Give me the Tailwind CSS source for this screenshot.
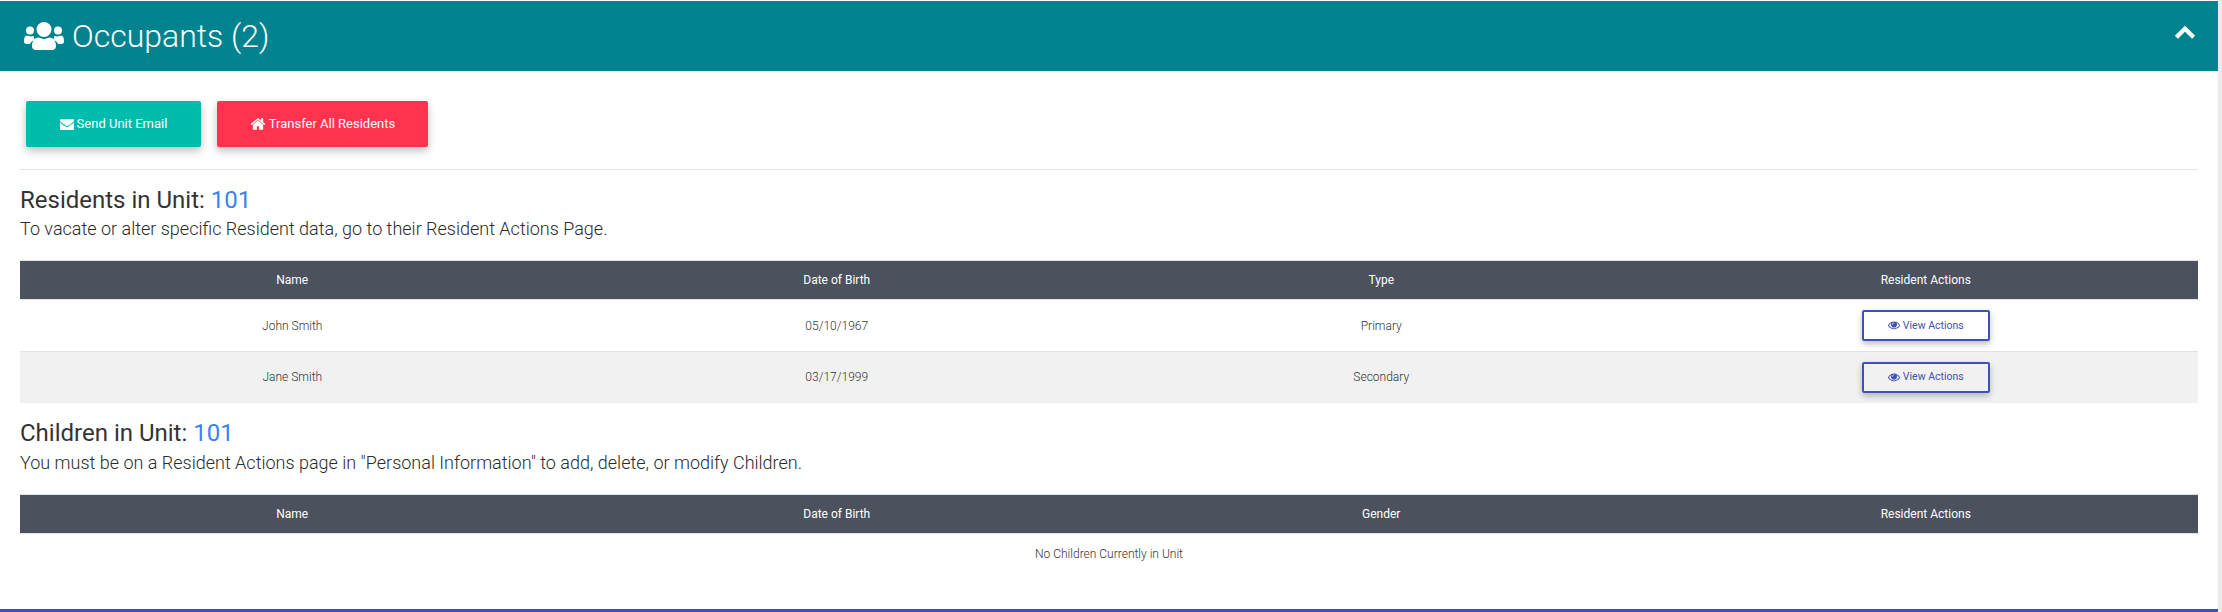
<!DOCTYPE html>
<html lang="en">
<head>
  <meta charset="UTF-8">
  <meta name="viewport" content="width=device-width, initial-scale=1.0">
  <title>Occupants</title>
  <script src="https://cdn.jsdelivr.net/npm/@tailwindcss/browser@4"></script>
</head>
<body class="bg-white font-['Roboto',sans-serif] overflow-hidden">
  <div class="flex h-[612px] w-[2222px]">
    <div class="flex h-[612px] w-[2218px] flex-col border-b-[3px] border-[#3f51b5] pt-px">
      <!-- card header -->
      <div class="flex h-[70px] items-center justify-between bg-[#00838f] pl-6 pr-[22px] text-white">
        <div class="flex items-center gap-2">
          <svg class="h-7 w-10 fill-white" viewBox="0 0 40 28">
            <circle cx="20" cy="7.500" r="7.500"/>
            <circle cx="6" cy="8.500" r="4"/>
            <circle cx="34" cy="8.500" r="4"/>
            <path d="M8 24C8 19 11 15.500 14.500 15.500C16 15.500 17.500 17 20 17C22.500 17 24 15.500 25.500 15.500C29 15.500 32 19 32 24C32 26.500 30.500 28 28 28H12C9.500 28 8 26.500 8 24Z"/>
            <path d="M0 19.500C0 15.500 1 13.500 3 13.500C4 13.500 5 14.500 7 14.500C8 14.500 9 14 9.600 13.800C9.600 15.500 10.200 17 11 18C8.500 18.500 7 20 5.800 22H2.500C1 22 0 21 0 19.500Z"/>
            <path d="M40 19.500C40 15.500 39 13.500 37 13.500C36 13.500 35 14.500 33 14.500C32 14.500 31 14 30.400 13.800C30.400 15.500 29.800 17 29 18C31.500 18.500 33 20 34.200 22H37.500C39 22 40 21 40 19.500Z"/>
          </svg>
          <h1 class="text-[32px] font-light leading-none">Occupants (2)</h1>
        </div>
        <svg class="mb-2.5 h-[22px] w-[22px] fill-white" viewBox="0 0 1792 1792"><path d="M1683 1331l-166 165q-19 19-45 19t-45-19l-531-531-531 531q-19 19-45 19t-45-19l-166-165q-19-19-19-45.500t19-45.500l742-741q19-19 45-19t45 19l742 741q19 19 19 45.500t-19 45.500z"/></svg>
      </div>

      <div class="px-5">
        <!-- action buttons -->
        <div class="flex gap-4 pl-1.5 pt-[30px] pb-[22px] border-b border-[#e5e5e5]">
          <button class="flex h-[46px] w-[175px] items-center justify-center gap-[3px] rounded-[2px] bg-[#00bcad] text-[13px] text-white shadow-[0_4px_8px_rgba(0,0,0,0.25)]">
            <svg class="h-[14px] w-[14px] fill-white" viewBox="0 0 1792 1792"><path d="M1792 710v794q0 66-47 113t-113 47h-1472q-66 0-113-47t-47-113v-794q44 49 101 87 362 246 497 345 57 42 92.500 65.500t94.500 48 110 24.500h2q51 0 110-24.500t94.500-48 92.500-65.500q170-123 498-345 57-39 100-87zm0-294q0 79-49 151t-122 123q-376 261-468 325-10 7-42.500 30.500t-54 38-52 32.500-57.500 27-50 9h-2q-23 0-50-9t-57.500-27-52-32.500-54-38-42.500-30.500q-91-64-262-182.500t-205-142.500q-62-42-117-115.500t-55-136.500q0-78 41.500-130t118.500-52h1472q65 0 112.500 47t47.500 113z"/></svg>
            Send Unit Email
          </button>
          <button class="flex h-[46px] w-[211px] items-center justify-center gap-[3px] rounded-[2px] bg-[#ff334f] text-[13px] text-white shadow-[0_4px_8px_rgba(0,0,0,0.25)]">
            <svg class="h-4 w-4 fill-white" viewBox="0 0 1792 1792"><path d="M1472 992v480q0 26-19 45t-45 19h-384v-384h-256v384h-384q-26 0-45-19t-19-45v-480q0-1 .5-3t.5-3l575-474 575 474q1 2 1 6zm223-69l-62 74q-8 9-21 11h-3q-13 0-21-7l-692-577-692 577q-12 8-24 7-13-2-21-11l-62-74q-8-10-7-23.500t11-21.500l719-599q32-26 76-26t76 26l244 204v-195q0-14 9-23t23-9h192q14 0 23 9t9 23v408l219 182q10 8 11 21.500t-7 23.500z"/></svg>
            Transfer All Residents
          </button>
        </div>

        <!-- residents -->
        <h2 class="mt-[16px] text-[24px] leading-[29px] text-[#333]">Residents in Unit: <span class="text-[#3b82f6]">101</span></h2>
        <p class="text-[18px] font-light leading-[27px] text-[#292b2c]">To vacate or alter specific Resident data, go to their Resident Actions Page.</p>
        <table class="mt-[18px] w-full table-fixed border-collapse text-center text-xs">
          <thead class="bg-[#4b515d] text-white">
            <tr class="h-[39px] border-y border-[#dee2e6]">
              <th class="font-normal">Name</th>
              <th class="font-normal">Date of Birth</th>
              <th class="font-normal">Type</th>
              <th class="font-normal">Resident Actions</th>
            </tr>
          </thead>
          <tbody class="font-light text-[#333]">
            <tr class="h-[52px] border-b border-[#dee2e6]">
              <td>John Smith</td>
              <td>05/10/1967</td>
              <td>Primary</td>
              <td>
                <button class="mx-auto flex h-[31px] w-[128px] items-center justify-center gap-[3px] rounded-[2px] border-2 border-[#3f51b5] text-[10.500px] font-normal text-[#3f51b5] shadow-[0_3px_6px_rgba(0,0,0,0.25)]">
                  <svg class="-mt-px h-3 w-3 fill-[#3f51b5]" viewBox="0 0 1792 1792"><path d="M1664 960q-152-236-381-353 61 104 61 225 0 185-131.500 316.500t-316.500 131.500-316.500-131.500-131.500-316.500q0-121 61-225-229 117-381 353 133 205 333.500 326.500t434.500 121.500 434.500-121.500 333.500-326.500zm-720-384q0-20-14-34t-34-14q-125 0-214.500 89.500t-89.500 214.500q0 20 14 34t34 14 34-14 14-34q0-86 61-147t147-61q20 0 34-14t14-34zm848 384q0 34-20 69-140 230-376.500 368.500t-499.500 138.500-499.500-139-376.500-368q-20-35-20-69t20-69q140-229 376.500-368t499.500-139 499.500 139 376.500 368q20 35 20 69z"/></svg>
                  View Actions
                </button>
              </td>
            </tr>
            <tr class="h-[51px] bg-[#f1f1f1]">
              <td>Jane Smith</td>
              <td>03/17/1999</td>
              <td>Secondary</td>
              <td>
                <button class="mx-auto flex h-[31px] w-[128px] items-center justify-center gap-[3px] rounded-[2px] border-2 border-[#3f51b5] text-[10.500px] font-normal text-[#3f51b5] shadow-[0_3px_6px_rgba(0,0,0,0.25)]">
                  <svg class="-mt-px h-3 w-3 fill-[#3f51b5]" viewBox="0 0 1792 1792"><path d="M1664 960q-152-236-381-353 61 104 61 225 0 185-131.500 316.500t-316.500 131.500-316.500-131.500-131.500-316.500q0-121 61-225-229 117-381 353 133 205 333.500 326.500t434.500 121.500 434.500-121.500 333.500-326.500zm-720-384q0-20-14-34t-34-14q-125 0-214.500 89.500t-89.500 214.500q0 20 14 34t34 14 34-14 14-34q0-86 61-147t147-61q20 0 34-14t14-34zm848 384q0 34-20 69-140 230-376.500 368.500t-499.500 138.500-499.500-139-376.500-368q-20-35-20-69t20-69q140-229 376.500-368t499.500-139 499.500 139 376.500 368q20 35 20 69z"/></svg>
                  View Actions
                </button>
              </td>
            </tr>
          </tbody>
        </table>

        <!-- children -->
        <h2 class="mt-[16px] text-[24px] leading-[29px] text-[#333]">Children in Unit: <span class="text-[#3b82f6]">101</span></h2>
        <p class="mt-px text-[18px] font-light leading-[27px] text-[#292b2c]">You must be on a Resident Actions page in "Personal Information" to add, delete, or modify Children.</p>
        <table class="mt-[18px] w-full table-fixed border-collapse text-center text-xs">
          <thead class="bg-[#4b515d] text-white">
            <tr class="h-[39px] border-y border-[#dee2e6]">
              <th class="font-normal">Name</th>
              <th class="font-normal">Date of Birth</th>
              <th class="font-normal">Gender</th>
              <th class="font-normal">Resident Actions</th>
            </tr>
          </thead>
          <tbody class="font-light text-[#333]">
            <tr class="h-[42px]">
              <td colspan="4">No Children Currently in Unit</td>
            </tr>
          </tbody>
        </table>
      </div>
    </div>
    <div class="h-[612px] w-1 bg-[#ebebeb]"></div>
  </div>
</body>
</html>
